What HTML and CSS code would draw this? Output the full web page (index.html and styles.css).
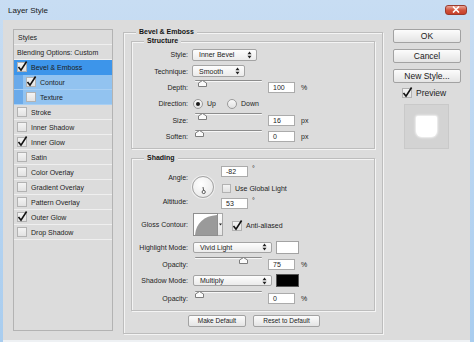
FILE: index.html
```html
<!DOCTYPE html>
<html lang="en">
  <head>
    <meta charset="UTF-8" />
    <title>Layer Style</title>
    <link rel="stylesheet" href="styles.css">
  </head>
  <body>
    <div class="window">
      <div class="titlebar">
        <span class="title">Layer Style</span>
        <span class="close">
          <svg width="8" height="7" viewBox="0 0 8 7"><path d="M1 0.5 L7 6.5 M7 0.5 L1 6.5" stroke="#fff" stroke-width="1.6"/></svg>
        </span>
      </div>

      <div class="dialog">
        <!-- effects list -->
        <div class="styles">
          <div class="item head">Styles</div>
          <div class="item plain">Blending Options: Custom</div>
          <div class="item sel"><span class="cb on"><svg viewBox="0 0 10 10"><path d="M1.5 5 L4 8.2 L9.6 -0.5"/></svg></span>Bevel &amp; Emboss</div>
          <div class="item sub"><span class="cb on"><svg viewBox="0 0 10 10"><path d="M1.5 5 L4 8.2 L9.6 -0.5"/></svg></span>Contour</div>
          <div class="item sub"><span class="cb"></span>Texture</div>
          <div class="item"><span class="cb"></span>Stroke</div>
          <div class="item"><span class="cb"></span>Inner Shadow</div>
          <div class="item"><span class="cb on"><svg viewBox="0 0 10 10"><path d="M1.5 5 L4 8.2 L9.6 -0.5"/></svg></span>Inner Glow</div>
          <div class="item"><span class="cb"></span>Satin</div>
          <div class="item"><span class="cb"></span>Color Overlay</div>
          <div class="item"><span class="cb"></span>Gradient Overlay</div>
          <div class="item"><span class="cb"></span>Pattern Overlay</div>
          <div class="item"><span class="cb on"><svg viewBox="0 0 10 10"><path d="M1.5 5 L4 8.2 L9.6 -0.5"/></svg></span>Outer Glow</div>
          <div class="item"><span class="cb"></span>Drop Shadow</div>
        </div>

        <!-- settings -->
        <div class="group outer">
          <div class="legend">Bevel &amp; Emboss</div>

          <div class="group structure">
            <div class="legend">Structure</div>
            <div class="rows">
              <div class="f">
                <label>Style:</label>
                <div class="select style-sel">Inner Bevel
                  <svg width="5" height="8" viewBox="0 0 5 8"><path d="M0.5 3.2 L2.5 0.5 L4.5 3.2Z M0.5 4.8 L2.5 7.5 L4.5 4.8Z" fill="#222"/></svg>
                </div>
              </div>
              <div class="f">
                <label>Technique:</label>
                <div class="select tech-sel">Smooth
                  <svg width="5" height="8" viewBox="0 0 5 8"><path d="M0.5 3.2 L2.5 0.5 L4.5 3.2Z M0.5 4.8 L2.5 7.5 L4.5 4.8Z" fill="#222"/></svg>
                </div>
              </div>
              <div class="f">
                <label>Depth:</label>
                <div class="slider"><span class="thumb" style="left: 3px"><svg width="9" height="7" viewBox="0 0 9 7"><path d="M0.5 6.5 L0.5 3 L4.5 0.5 L8.5 3 L8.5 6.5Z" fill="#fbfbfb" stroke="#7d7d7d"/></svg></span></div>
                <div class="num">100</div>
                <span class="unit">%</span>
              </div>
              <div class="f">
                <label>Direction:</label>
                <span class="radio on"></span><span class="rtext">Up</span>
                <span class="radio down"></span><span class="rtext">Down</span>
              </div>
              <div class="f">
                <label>Size:</label>
                <div class="slider"><span class="thumb" style="left: 3px"><svg width="9" height="7" viewBox="0 0 9 7"><path d="M0.5 6.5 L0.5 3 L4.5 0.5 L8.5 3 L8.5 6.5Z" fill="#fbfbfb" stroke="#7d7d7d"/></svg></span></div>
                <div class="num">16</div>
                <span class="unit">px</span>
              </div>
              <div class="f">
                <label>Soften:</label>
                <div class="slider"><span class="thumb" style="left: 0px"><svg width="9" height="7" viewBox="0 0 9 7"><path d="M0.5 6.5 L0.5 3 L4.5 0.5 L8.5 3 L8.5 6.5Z" fill="#fbfbfb" stroke="#7d7d7d"/></svg></span></div>
                <div class="num">0</div>
                <span class="unit">px</span>
              </div>
            </div>
          </div>

          <div class="group shading">
            <div class="legend">Shading</div>

            <div class="angle">
              <div class="alabels">
                <span>Angle:</span>
                <span class="alt">Altitude:</span>
              </div>
              <div class="dial">
                <svg width="22" height="22" viewBox="0 0 22 22">
                  <line x1="11" y1="11" x2="11.6" y2="14.5" stroke="#333" stroke-width="0.8"/>
                  <circle cx="11.7" cy="16" r="1.6" fill="#fff" stroke="#333" stroke-width="0.8"/>
                </svg>
              </div>
              <div class="acol">
                <div class="arow"><div class="num">-82</div><span class="deg">°</span></div>
                <div class="check-row"><span class="cb"></span>Use Global Light</div>
                <div class="arow alt-row"><div class="num">53</div><span class="deg">°</span></div>
              </div>
            </div>

            <div class="f contour-row">
              <label>Gloss Contour:</label>
              <div class="contour">
                <svg width="23" height="21" viewBox="0 0 23 21"><path d="M1 21 C2 9 10 2 23 1 L23 21Z" fill="#9a9a9a"/></svg>
              </div>
              <div class="contour-drop">
                <svg width="3" height="3" viewBox="0 0 3 3"><path d="M0 0.5 L3 0.5 L1.5 2.5Z" fill="#222"/></svg>
              </div>
              <span class="cb on"><svg viewBox="0 0 10 10"><path d="M1.5 5 L4 8.2 L9.6 -0.5"/></svg></span>
              <span class="cb-text">Anti-aliased</span>
            </div>

            <div class="f mode-row">
              <label>Highlight Mode:</label>
              <div class="select mode-sel">Vivid Light
                <svg width="5" height="8" viewBox="0 0 5 8"><path d="M0.5 3.2 L2.5 0.5 L4.5 3.2Z M0.5 4.8 L2.5 7.5 L4.5 4.8Z" fill="#222"/></svg>
              </div>
              <span class="swatch white"></span>
            </div>
            <div class="f op-row">
              <label>Opacity:</label>
              <div class="slider"><span class="thumb" style="left: 44px"><svg width="9" height="7" viewBox="0 0 9 7"><path d="M0.5 6.5 L0.5 3 L4.5 0.5 L8.5 3 L8.5 6.5Z" fill="#fbfbfb" stroke="#7d7d7d"/></svg></span></div>
              <div class="num">75</div>
              <span class="unit">%</span>
            </div>
            <div class="f mode-row shadow-row">
              <label>Shadow Mode:</label>
              <div class="select mode-sel">Multiply
                <svg width="5" height="8" viewBox="0 0 5 8"><path d="M0.5 3.2 L2.5 0.5 L4.5 3.2Z M0.5 4.8 L2.5 7.5 L4.5 4.8Z" fill="#222"/></svg>
              </div>
              <span class="swatch black"></span>
            </div>
            <div class="f op-row">
              <label>Opacity:</label>
              <div class="slider"><span class="thumb" style="left: 0px"><svg width="9" height="7" viewBox="0 0 9 7"><path d="M0.5 6.5 L0.5 3 L4.5 0.5 L8.5 3 L8.5 6.5Z" fill="#fbfbfb" stroke="#7d7d7d"/></svg></span></div>
              <div class="num">0</div>
              <span class="unit">%</span>
            </div>
          </div>

          <div class="defaults">
            <button class="btn small make">Make Default</button>
            <button class="btn small reset">Reset to Default</button>
          </div>
        </div>

        <!-- dialog buttons -->
        <div class="side">
          <button class="btn big">OK</button>
          <button class="btn big">Cancel</button>
          <button class="btn big">New Style...</button>
          <div class="preview-row">
            <span class="cb on"><svg viewBox="0 0 10 10"><path d="M1.5 5 L4 8.2 L9.6 -0.5"/></svg></span>
            <span>Preview</span>
          </div>
          <div class="preview">
            <div class="swatch-shape"></div>
          </div>
        </div>
      </div>
    </div>
  </body>
</html>
```

FILE: styles.css
```css
* {
  box-sizing: border-box;
}

html,
body {
  margin: 0;
  padding: 0;
}

body {
  width: 474px;
  height: 342px;
  overflow: hidden;
  font-family: "Liberation Sans", Arial, sans-serif;
  font-size: 7px;
  color: #1c1c1c;
}

.window {
  width: 474px;
  height: 342px;
  display: flex;
  flex-direction: column;
  background: linear-gradient(#c8ddf3, #a9cdef);
  padding: 0 4px 0 3px;
}

.titlebar {
  height: 20px;
  flex: none;
  display: flex;
  align-items: center;
  justify-content: space-between;
  padding: 0 3px 0 5px;
}

.title {
  font-size: 8px;
  color: #1a1a1a;
}

.close {
  width: 22px;
  height: 10px;
  margin-top: -1px;
  display: flex;
  align-items: center;
  justify-content: center;
  background: linear-gradient(#e9a79a, #d2553f 50%, #c7402a);
  border: 1px solid #9b3b2e;
  border-radius: 3px;
}

.dialog {
  flex: 1;
  display: flex;
  align-items: flex-start;
  background: #dcdcdc;
  padding: 9px 0 0 10px;
  border-bottom: 2px solid #eef1f4;
}

/* effects list */
.styles {
  width: 100px;
  height: 302px;
  flex: none;
  border: 1px solid #b3b3b3;
  background: #dcdcdc;
}

.item {
  height: 15px;
  display: flex;
  align-items: center;
  padding-left: 3px;
  border-bottom: 1px solid #efefef;
  white-space: nowrap;
}

.item.head {
  padding-left: 4px;
}

.item.sel {
  background: #3d95ea;
  border-bottom-color: #3d95ea;
}

.item.sub {
  padding-left: 12px;
  background: linear-gradient(90deg, #6aaaea 9px, #92c3f0 9px);
  border-bottom-color: #a8cff3;
}

.item .cb {
  margin-right: 4px;
}

.cb {
  width: 10px;
  height: 10px;
  flex: none;
  display: inline-block;
  border: 1px solid #b2b2b2;
  background: linear-gradient(#f4f4f4, #e2e2e2);
  position: relative;
}

.cb svg {
  width: 10px;
  height: 10px;
  overflow: visible;
  display: block;
  margin: -1px 0 0 -1px;
}

.cb path {
  fill: none;
  stroke: #111;
  stroke-width: 1.6;
}

/* group boxes */
.group {
  border: 1px solid #bdbdbd;
  box-shadow: inset 1px 1px 0 #f4f4f4, 1px 1px 0 #f4f4f4;
}

.legend {
  display: table;
  height: 9px;
  line-height: 9px;
  margin: -6px 0 0 12px;
  padding: 0 3px;
  background: #dcdcdc;
  font-weight: bold;
  color: #141414;
}

.outer {
  width: 260px;
  height: 302px;
  flex: none;
  margin: 3px 0 0 10px;
}

.structure {
  height: 108px;
  margin: 5px 7px 0 7px;
}

.rows {
  padding-top: 1.5px;
}

.f {
  display: flex;
  align-items: center;
  height: 16.4px;
}

.f label {
  width: 56px;
  flex: none;
  text-align: right;
  margin-right: 4px;
}

.select {
  height: 12px;
  display: flex;
  align-items: center;
  justify-content: space-between;
  padding: 0 4px 0 6px;
  border: 1px solid #a4a4a4;
  border-radius: 2px;
  background: linear-gradient(#fdfdfd, #ebebeb);
}

.style-sel {
  width: 65px;
}

.tech-sel {
  width: 53px;
}

.slider {
  width: 67px;
  height: 11px;
  flex: none;
  margin-left: 3px;
  position: relative;
  border-top: 1px solid #8d8d8d;
  box-shadow: inset 0 1px 0 #f7f7f7;
  border-radius: 1px;
  margin-top: -3px;
}

.slider .thumb {
  position: absolute;
  top: -1px;
  line-height: 0;
}

.num {
  width: 27px;
  height: 11px;
  flex: none;
  margin-left: 6px;
  padding-left: 4px;
  line-height: 9px;
  background: #fff;
  border: 1px solid #ababab;
}

.unit {
  margin-left: 6px;
}

.radio {
  width: 10px;
  height: 10px;
  flex: none;
  border: 1px solid #9a9a9a;
  border-radius: 50%;
  background: linear-gradient(#f9f9f9, #e1e1e1);
  margin-left: 1px;
  display: flex;
  align-items: center;
  justify-content: center;
}

.radio.on::after {
  content: "";
  width: 4px;
  height: 4px;
  border-radius: 50%;
  background: #1a1a1a;
}

.radio.down {
  margin-left: 11px;
}

.rtext {
  margin-left: 4px;
}

/* shading */
.shading {
  height: 153px;
  margin: 9px 7px 0 7px;
}

.angle {
  display: flex;
  height: 42px;
  margin-top: 4px;
}

.alabels {
  width: 56px;
  flex: none;
  display: flex;
  flex-direction: column;
  align-items: flex-end;
  line-height: 9px;
  padding-top: 7px;
}

.alabels .alt {
  margin-top: 15px;
}

.dial {
  width: 22px;
  height: 22px;
  flex: none;
  margin: 10px 0 0 4px;
  border: 1px solid #a3a3a3;
  border-radius: 50%;
  background: radial-gradient(circle at 40% 35%, #ffffff, #ececec 70%, #dcdcdc);
  box-shadow: 0 0 0 1px #eeeeee;
  line-height: 0;
}

.dial svg {
  margin: -1px 0 0 -1px;
}

.acol {
  display: flex;
  flex-direction: column;
  margin-left: 1px;
}

.arow {
  display: flex;
  align-items: flex-start;
}

.deg {
  margin-left: 4px;
  margin-top: -1px;
}

.check-row {
  display: flex;
  align-items: center;
  margin: 7px 0 0 7px;
  height: 9px;
}

.check-row .cb {
  width: 9px;
  height: 9px;
  margin-right: 4px;
}

.alt-row {
  margin-top: 5px;
}

.contour-row {
  height: 23px;
  margin-top: 5px;
}

.contour {
  width: 25px;
  height: 23px;
  flex: none;
  margin-left: 1px;
  background: #fff;
  border: 1px solid #8f8f8f;
  line-height: 0;
}

.contour-drop {
  width: 5px;
  height: 23px;
  flex: none;
  border: 1px solid #a8a8a8;
  border-left: 0;
  background: linear-gradient(#fbfbfb, #e6e6e6);
  display: flex;
  align-items: center;
  justify-content: center;
  line-height: 0;
}

.contour-row .cb {
  margin-left: 9px;
  margin-top: 2px;
}

.cb-text {
  margin-left: 4px;
  margin-top: 2px;
}

.mode-row {
  height: 12px;
  margin-top: 5px;
}

.shadow-row {
  height: 13px;
  margin-top: 4px;
}

.mode-sel {
  width: 79px;
  margin-left: 1px;
  height: 11px;
}

.swatch {
  width: 23px;
  height: 13px;
  flex: none;
  margin-left: 4px;
  border: 1px solid #a3a3a3;
}

.swatch.white {
  background: #fff;
}

.swatch.black {
  background: #000;
  border-color: #555;
}

.op-row {
  height: 12px;
  margin-top: 5px;
}

.op-row .slider {
  margin-left: 3px;
}

/* buttons */
.btn {
  font-family: "Liberation Sans", Arial, sans-serif;
  color: #1a1a1a;
  border: 1px solid #a2a2a2;
  border-radius: 2px;
  background: linear-gradient(#fcfcfc, #e4e4e4);
  padding: 0;
  cursor: pointer;
}

.defaults {
  display: flex;
  justify-content: center;
  gap: 7px;
  margin-top: 4px;
  padding-left: 2px;
}

.btn.small {
  height: 12px;
  font-size: 6.5px;
  line-height: 10px;
}

.btn.make {
  width: 58px;
}

.btn.reset {
  width: 67px;
}

.side {
  width: 68px;
  flex: none;
  margin-left: 10px;
  display: flex;
  flex-direction: column;
}

.btn.big {
  height: 14px;
  font-size: 8.5px;
  line-height: 12px;
  margin-bottom: 6px;
}

.preview-row {
  display: flex;
  align-items: center;
  height: 10px;
  margin: -1px 0 0 9px;
  font-size: 8.5px;
}

.preview-row .cb {
  margin-right: 4px;
}

.preview {
  width: 45px;
  height: 45px;
  margin: 6px 0 0 11px;
  background: #d3d3d3;
  border: 1px solid #c9c9c9;
  display: flex;
  align-items: center;
  justify-content: center;
}

.swatch-shape {
  width: 21px;
  height: 21px;
  background: #ffffff;
  border-radius: 2px 2px 6px 6px;
  box-shadow: 0 0 2px 1px #f2f2f2;
}
```
